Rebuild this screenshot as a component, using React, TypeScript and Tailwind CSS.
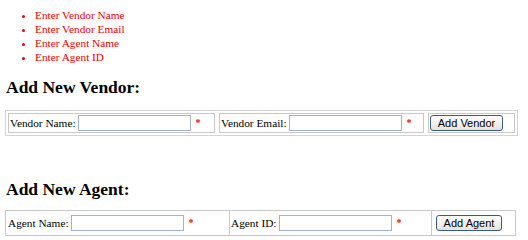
import React from 'react';

const serif = { fontFamily: '"Liberation Serif", "Times New Roman", serif' };

function Field({ label }: { label: string }) {
  return (
    <div className="flex items-center h-full">
      <span>{label}</span>
      <input type="text" className="ml-[2px] w-[113px] h-[16px] border border-[#9fb4cc] bg-white outline-none" />
      <span className="ml-[5px] text-[#e00] text-[10px] font-bold leading-none">*</span>
    </div>
  );
}

function XpButton({ label, width }: { label: string; width: string }) {
  return (
    <button
      type="button"
      className={`${width} h-[16px] rounded-[3px] border border-[#3c5a82] bg-gradient-to-b from-white to-[#e6e3d9] text-[11px] leading-none text-black`}
      style={{ fontFamily: '"Liberation Sans", Arial, sans-serif' }}
    >
      {label}
    </button>
  );
}

export default function App() {
  return (
    <div className="w-[528px] h-[240px] bg-white text-black text-[11.3px] leading-[14px] overflow-hidden" style={serif}>
      <ul className="list-disc pl-[35px] pt-[8px] text-[#e00] marker:text-[#e00]">
        <li>Enter Vendor Name</li>
        <li>Enter Vendor Email</li>
        <li>Enter Agent Name</li>
        <li>Enter Agent ID</li>
      </ul>

      <h3 className="ml-[6px] mt-[13px] text-[17.5px] leading-[20px] font-bold">Add New Vendor:</h3>

      <div className="ml-[5px] mt-[13px] w-[513px] h-[26px] border border-[#d4d4d4] p-[2px] flex gap-[4px]">
        <div className="w-[207px] border border-[#c8c8c8] pl-[1px]">
          <Field label="Vendor Name:" />
        </div>
        <div className="w-[205px] border border-[#c8c8c8] pl-[1px]">
          <Field label="Vendor Email:" />
        </div>
        <div className="flex-1 border border-[#c8c8c8] flex items-center pl-[1px]">
          <XpButton label="Add Vendor" width="w-[73px]" />
        </div>
      </div>

      <h3 className="ml-[6px] mt-[43px] text-[17.5px] leading-[20px] font-bold">Add New Agent:</h3>

      <div className="ml-[5px] mt-[11px] w-[511px] h-[26px] border border-[#c8c8c8] flex">
        <div className="w-[224px] border-r border-[#c8c8c8] pl-[2px]">
          <Field label="Agent Name:" />
        </div>
        <div className="w-[202px] border-r border-[#c8c8c8] pl-[1px]">
          <Field label="Agent ID:" />
        </div>
        <div className="flex-1 flex items-center pl-[4px]">
          <XpButton label="Add Agent" width="w-[66px]" />
        </div>
      </div>
    </div>
  );
}
